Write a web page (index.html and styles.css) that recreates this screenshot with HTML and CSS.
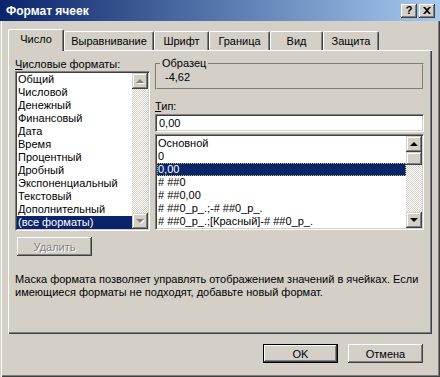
FILE: index.html
```html
<!DOCTYPE html>
<html lang="ru">
<head>
    <meta charset="UTF-8">
    <title>Формат ячеек</title>
    <link rel="stylesheet" href="styles.css">
</head>
<body>
    <div class="window">
        <div class="titlebar">
            <span class="title">Формат ячеек</span>
            <div class="caption-btns">
                <span class="cap-btn help">?</span>
                <span class="cap-btn close">
                    <svg width="8" height="7" viewBox="0 0 8 7"><path d="M0 0h2l2 2 2-2h2L5 3.5 8 7H6L4 5 2 7H0l3-3.5z"/></svg>
                </span>
            </div>
        </div>
        <div class="client">
            <div class="tabs">
                <span class="tab active tab-num">Число</span>
                <span class="tab tab-align">Выравнивание</span>
                <span class="tab tab-font">Шрифт</span>
                <span class="tab tab-border">Граница</span>
                <span class="tab tab-view">Вид</span>
                <span class="tab tab-protect">Защита</span>
            </div>
            <div class="panel">
                <div class="columns">
                    <div class="col-left">
                        <div class="label"><u>Ч</u>исловые форматы:</div>
                        <div class="listbox cat-list">
                            <ul class="items">
                                <li>Общий</li>
                                <li>Числовой</li>
                                <li>Денежный</li>
                                <li>Финансовый</li>
                                <li>Дата</li>
                                <li>Время</li>
                                <li>Процентный</li>
                                <li>Дробный</li>
                                <li>Экспоненциальный</li>
                                <li>Текстовый</li>
                                <li>Дополнительный</li>
                                <li class="selected">(все форматы)</li>
                            </ul>
                            <div class="scrollbar disabled">
                                <span class="sb-btn up"></span>
                                <span class="sb-track"></span>
                                <span class="sb-btn down"></span>
                            </div>
                        </div>
                        <button class="btn btn-delete" disabled>Удалить</button>
                    </div>
                    <div class="col-right">
                        <fieldset class="group">
                            <legend>Образец</legend>
                            <div class="sample">-4,62</div>
                        </fieldset>
                        <div class="label label-type"><u>Т</u>ип:</div>
                        <div class="textbox">0,00</div>
                        <div class="listbox type-list">
                            <ul class="items">
                                <li>Основной</li>
                                <li>0</li>
                                <li class="selected focused">0,00</li>
                                <li># ##0</li>
                                <li># ##0,00</li>
                                <li># ##0_р_.;-# ##0_р_.</li>
                                <li># ##0_р_.;[Красный]-# ##0_р_.</li>
                            </ul>
                            <div class="scrollbar">
                                <span class="sb-btn up"></span>
                                <span class="sb-thumb"></span>
                                <span class="sb-track"></span>
                                <span class="sb-btn down"></span>
                            </div>
                        </div>
                    </div>
                </div>
                <p class="hint">Маска формата позволяет управлять отображением значений в ячейках. Если имеющиеся форматы не подходят, добавьте новый формат.</p>
            </div>
            <div class="buttons">
                <button class="btn default">OK</button>
                <button class="btn">Отмена</button>
            </div>
        </div>
    </div>
</body>
</html>
```

FILE: styles.css
```css
body {
    margin: 0;
    background: #d4d0c8;
    font-family: "Liberation Sans", Arial, sans-serif;
    font-size: 11px;
    color: #000;
}

.window {
    width: 440px;
    height: 377px;
    display: flex;
    flex-direction: column;
    background: #d4d0c8;
}

/* title bar */
.titlebar {
    height: 21px;
    flex-shrink: 0;
    display: flex;
    align-items: center;
    justify-content: space-between;
    padding: 0 5px 0 6px;
    background: linear-gradient(to right, #0a246a, #a6caf0);
}

.title {
    color: #fff;
    font-weight: bold;
    font-size: 12px;
}

.caption-btns {
    display: flex;
    gap: 2px;
}

.cap-btn {
    width: 16px;
    height: 14px;
    box-sizing: border-box;
    display: flex;
    align-items: center;
    justify-content: center;
    background: #d4d0c8;
    box-shadow: inset -1px -1px #404040, inset 1px 1px #fff, inset -2px -2px #808080;
    font-weight: bold;
    font-size: 11px;
    line-height: 1;
}

.cap-btn svg {
    fill: #000;
}

/* client area */
.client {
    flex: 1;
    padding: 0 8px;
    box-shadow: inset 1px 0 #d4d0c8, inset 2px 0 #fff, inset -1px -1px #404040, inset -2px -2px #808080;
}

.tabs {
    display: flex;
    align-items: flex-end;
    height: 29px;
    padding-top: 8px;
    box-sizing: border-box;
}

.tab {
    height: 19px;
    box-sizing: border-box;
    display: flex;
    justify-content: center;
    align-items: center;
    padding-bottom: 1px;
    border-top: 1px solid #fff;
    border-left: 1px solid #fff;
    border-right: 1px solid #404040;
    border-radius: 2px 2px 0 0;
    box-shadow: inset -1px 0 #808080;
}

.tab.active {
    height: 22px;
    margin-bottom: -1px;
    padding-bottom: 3px;
    position: relative;
    z-index: 1;
    background: #d4d0c8;
}

.tab-num { width: 56px; }
.tab-align { width: 90px; }
.tab-font { width: 55px; }
.tab-border { width: 61px; }
.tab-view { width: 53px; }
.tab-protect { width: 56px; }

.panel {
    height: 284px;
    box-sizing: border-box;
    padding: 8px 8px 0 7px;
    box-shadow: inset 1px 1px #fff, inset -1px -1px #404040, inset -2px -2px #808080;
}

.columns {
    display: flex;
    gap: 5px;
}

.col-left {
    width: 135px;
    display: flex;
    flex-direction: column;
    align-items: flex-start;
}

.col-right {
    flex: 1;
    margin-top: -1px;
}

.label {
    line-height: 13px;
}

.label-type {
    margin-top: 10px;
}

/* list boxes */
.listbox {
    display: flex;
    box-sizing: border-box;
    background: #fff;
    border: 1px solid;
    border-color: #808080 #fff #fff #808080;
    box-shadow: inset 1px 1px #404040, inset -1px -1px #d4d0c8;
    padding: 1px;
}

.cat-list {
    width: 135px;
    height: 160px;
}

.type-list {
    margin-top: 2px;
    height: 96px;
}

.items {
    flex: 1;
    list-style: none;
    margin: 0;
    padding: 0;
    overflow: hidden;
}

.items li {
    line-height: 13px;
    padding-left: 1px;
    white-space: nowrap;
}

.type-list .items {
    padding-top: 1px;
}

.items li.selected {
    background: #0a246a;
    color: #fff;
}

.items li.focused {
    outline: 1px dotted #c8c060;
    outline-offset: -1px;
}

.scrollbar {
    width: 16px;
    display: flex;
    flex-direction: column;
    background-image: repeating-conic-gradient(#fff 0 25%, #d4d0c8 0 50%);
    background-size: 2px 2px;
}

.sb-btn, .sb-thumb {
    height: 16px;
    flex-shrink: 0;
    box-sizing: border-box;
    background: #d4d0c8;
    box-shadow: inset -1px -1px #404040, inset 1px 1px #d4d0c8, inset -2px -2px #808080, inset 2px 2px #fff;
    display: flex;
    align-items: center;
    justify-content: center;
}

.sb-thumb {
    height: 13px;
}

.sb-track {
    flex: 1;
}

.sb-btn::before {
    content: "";
    border-left: 4px solid transparent;
    border-right: 4px solid transparent;
}

.sb-btn.up::before {
    border-bottom: 4px solid #000;
}

.sb-btn.down::before {
    border-top: 4px solid #000;
}

.scrollbar.disabled .sb-btn.up::before {
    border-bottom-color: #808080;
    filter: drop-shadow(1px 1px 0 #fff);
}

.scrollbar.disabled .sb-btn.down::before {
    border-top-color: #808080;
    filter: drop-shadow(1px 1px 0 #fff);
}

/* sample group */
.group {
    margin: 0;
    padding: 0 0 4px 3px;
    border: 2px groove #d4d0c8;
}

.group legend {
    padding: 0 2px;
    line-height: 13px;
}

.sample {
    line-height: 13px;
    padding-left: 5px;
    margin-top: 1px;
}

.textbox {
    margin-top: 1px;
    height: 18px;
    box-sizing: border-box;
    background: #fff;
    border: 1px solid;
    border-color: #808080 #fff #fff #808080;
    box-shadow: inset 1px 1px #404040, inset -1px -1px #d4d0c8;
    padding: 2px 3px;
    line-height: 13px;
}

.hint {
    margin: 17px 0 0;
    line-height: 13px;
}

/* buttons */
.btn {
    font-family: inherit;
    font-size: 11px;
    width: 75px;
    height: 19px;
    padding: 0;
    border: none;
    background: #d4d0c8;
    color: #000;
    box-shadow: inset -1px -1px #404040, inset 1px 1px #fff, inset -2px -2px #808080;
}

.btn:disabled {
    color: #808080;
    text-shadow: 1px 1px #fff;
}

.btn-delete {
    margin: 6px 0 0 2px;
}

.btn.default {
    border: 1px solid #000;
    box-shadow: inset -1px -1px #404040, inset 1px 1px #fff, inset -2px -2px #808080;
}

.buttons {
    display: flex;
    justify-content: flex-end;
    gap: 10px;
    margin: 10px 9px 0 0;
}
```
